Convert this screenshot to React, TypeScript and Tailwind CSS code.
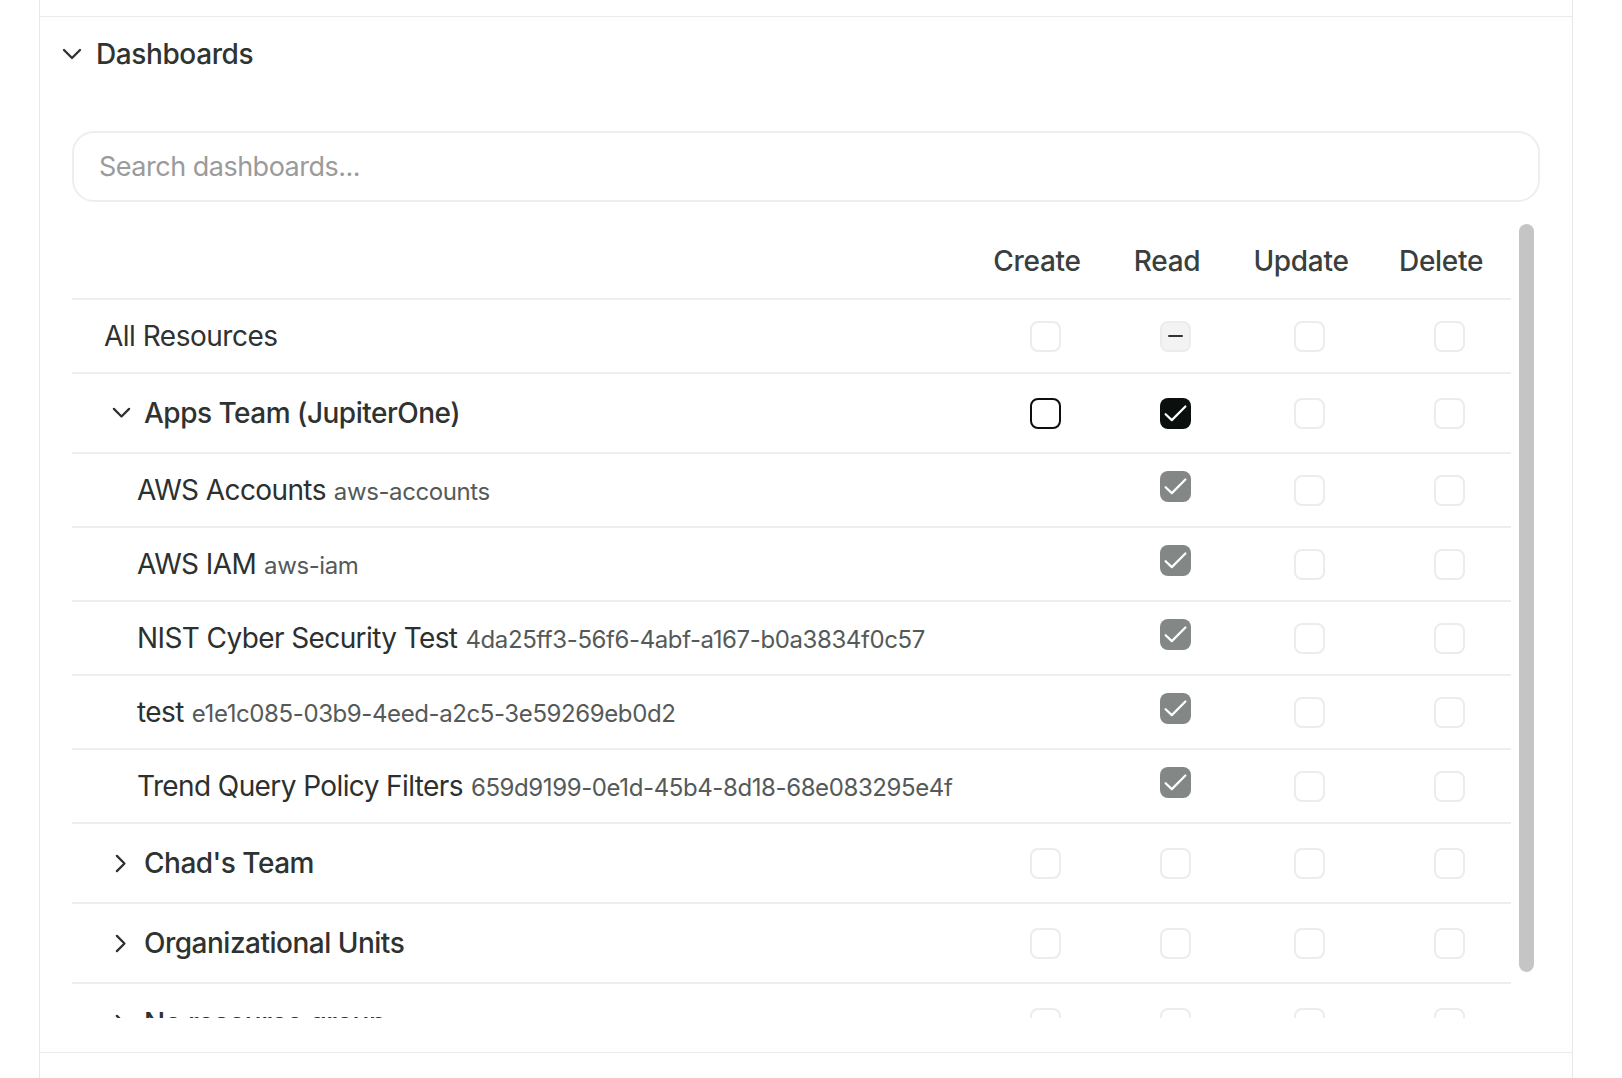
import React from 'react';

type Mark = 'empty' | 'outline' | 'checked' | 'muted' | 'mixed' | null;

type Row = {
  kind: 'all' | 'group' | 'item';
  name: string;
  slug?: string;
  open?: boolean;
  marks: Mark[];
};

const rows: Row[] = [
  { kind: 'all', name: 'All Resources', marks: ['empty', 'mixed', 'empty', 'empty'] },
  { kind: 'group', name: 'Apps Team (JupiterOne)', open: true, marks: ['outline', 'checked', 'empty', 'empty'] },
  { kind: 'item', name: 'AWS Accounts', slug: 'aws-accounts', marks: [null, 'muted', 'empty', 'empty'] },
  { kind: 'item', name: 'AWS IAM', slug: 'aws-iam', marks: [null, 'muted', 'empty', 'empty'] },
  { kind: 'item', name: 'NIST Cyber Security Test', slug: '4da25ff3-56f6-4abf-a167-b0a3834f0c57', marks: [null, 'muted', 'empty', 'empty'] },
  { kind: 'item', name: 'test', slug: 'e1e1c085-03b9-4eed-a2c5-3e59269eb0d2', marks: [null, 'muted', 'empty', 'empty'] },
  { kind: 'item', name: 'Trend Query Policy Filters', slug: '659d9199-0e1d-45b4-8d18-68e083295e4f', marks: [null, 'muted', 'empty', 'empty'] },
  { kind: 'group', name: "Chad's Team", marks: ['empty', 'empty', 'empty', 'empty'] },
  { kind: 'group', name: 'Organizational Units', marks: ['empty', 'empty', 'empty', 'empty'] },
  { kind: 'group', name: 'No resource group', marks: ['empty', 'empty', 'empty', 'empty'] },
];

const columns = ['Create', 'Read', 'Update', 'Delete'];

function ChevronDown({ className }: { className?: string }) {
  return (
    <svg viewBox="0 0 20 12" className={className} fill="none">
      <path d="M2 2l8 8 8-8" stroke="currentColor" strokeWidth="2.4" strokeLinecap="round" strokeLinejoin="round" />
    </svg>
  );
}

function ChevronRight({ className }: { className?: string }) {
  return (
    <svg viewBox="0 0 12 20" className={className} fill="none">
      <path d="M2 2l8 8-8 8" stroke="currentColor" strokeWidth="2.4" strokeLinecap="round" strokeLinejoin="round" />
    </svg>
  );
}

function Tick() {
  return (
    <svg viewBox="0 0 16 16" className="h-full w-full" fill="none">
      <path d="M2.9 8.4l3.2 3 7-7" stroke="white" strokeWidth="1.15" strokeLinecap="round" strokeLinejoin="round" />
    </svg>
  );
}

function Checkbox({ mark }: { mark: Mark }) {
  if (mark === null) return null;
  if (mark === 'checked') {
    return (
      <span className="block h-[31px] w-[31px] rounded-[8px] bg-[#0b100e]">
        <Tick />
      </span>
    );
  }
  if (mark === 'muted') {
    return (
      <span className="block h-[31px] w-[31px] -translate-y-[4px] rounded-[8px] bg-[#838785]">
        <Tick />
      </span>
    );
  }
  if (mark === 'mixed') {
    return (
      <span className="flex h-[31px] w-[31px] items-center justify-center rounded-[8px] border-2 border-[#ececec] bg-[#f3f3f3]">
        <span className="block h-[2.5px] w-[15px] rounded-full bg-[#2f3432]" />
      </span>
    );
  }
  if (mark === 'outline') {
    return <span className="block h-[31px] w-[31px] rounded-[8px] border-2 border-[#0b100e] bg-white" />;
  }
  return <span className="block h-[31px] w-[31px] rounded-[8px] border-2 border-[#ececec] bg-white" />;
}

const grid = 'grid grid-cols-[1fr_148px_112px_156px_124px] items-center border-b-2 border-[#eeeeee]';

function ResourceRow({ row }: { row: Row }) {
  const height = row.kind === 'group' ? 'h-[80px]' : row.kind === 'all' ? 'h-[74px]' : 'h-[74px]';
  return (
    <div className={`${grid} ${height}`}>
      <div className="flex min-w-0 items-center">
        {row.kind === 'all' && (
          <span className="pl-[32px] text-[28px] tracking-[-0.5px] text-[#2e3331]">{row.name}</span>
        )}
        {row.kind === 'group' && (
          <div className="flex items-center gap-[10px] pl-[36px]">
            <span className="flex w-[26px] justify-center text-[#2e3331]">
              {row.open ? <ChevronDown className="w-[19px]" /> : <ChevronRight className="h-[19px]" />}
            </span>
            <span className="text-[28px] font-medium tracking-[-0.5px] text-[#2e3331]">{row.name}</span>
          </div>
        )}
        {row.kind === 'item' && (
          <div className="flex items-baseline gap-[8px] whitespace-nowrap pl-[65px]">
            <span className="text-[28px] tracking-[-0.6px] text-[#2c302e]">{row.name}</span>
            <span className="text-[24px] tracking-[-0.4px] text-[#555a58]">{row.slug}</span>
          </div>
        )}
      </div>
      {row.marks.map((m, i) => (
        <div key={i} className="flex justify-center">
          <Checkbox mark={m} />
        </div>
      ))}
    </div>
  );
}

export default function App() {
  return (
    <div className="h-[1078px] w-full overflow-hidden bg-white font-['Inter','Noto_Sans',sans-serif]">
      <div className="ml-[39px] h-full w-[1534px] border-x border-[#e8e8e8]">
        <div className="h-[17px] border-b border-[#ebebeb]" />

        <section className="border-b border-[#ebebeb] px-[32px] pb-[34px]">
          <div className="-ml-[10px] flex h-[74px] items-center gap-[14px] text-[#2f3432]">
            <ChevronDown className="w-[20px]" />
            <h2 className="text-[28px] font-medium tracking-[-0.4px]">Dashboards</h2>
          </div>

          <input
            type="text"
            placeholder="Search dashboards..."
            className="mt-[40px] h-[71px] w-full rounded-[22px] border-2 border-[#eeeeee] px-[25px] text-[27px] tracking-[-0.5px] text-[#2e3331] outline-none placeholder:text-[#9b9b9b]"
          />

          <div className="relative mt-[22px] mr-[6px] h-[794px]">
            <div className="h-full overflow-y-auto pr-[23px] [scrollbar-width:none]">
              <div className="pb-[5px]">
                <div className={`${grid} h-[76px]`}>
                  <div />
                  {columns.map((c) => (
                    <div key={c} className="pr-[16px] text-center text-[28px] font-medium tracking-[-0.3px] text-[#3a3f3d]">
                      {c}
                    </div>
                  ))}
                </div>
                {rows.map((r) => (
                  <ResourceRow key={r.name} row={r} />
                ))}
              </div>
            </div>
            {/* scrollbar thumb */}
            <div className="absolute right-0 top-0 h-[748px] w-[15px] rounded-full bg-[#c4c5c4]" />
          </div>
        </section>
      </div>
    </div>
  );
}
